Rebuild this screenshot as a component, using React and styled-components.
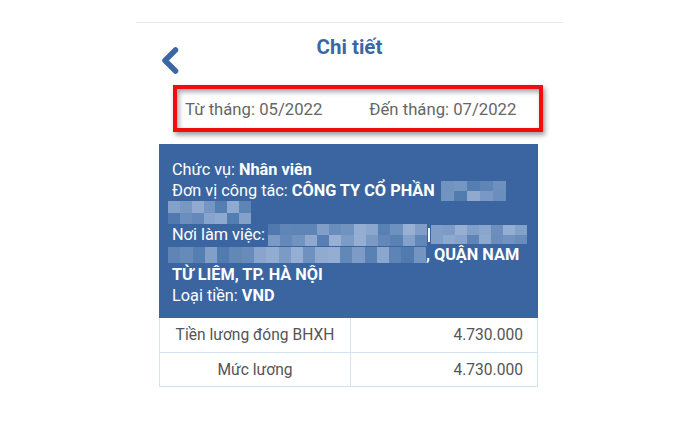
import React from "react";
import styled, { createGlobalStyle } from "styled-components";

const Global = createGlobalStyle`
  html, body { margin: 0; padding: 0; background: #fff; }
  body { font-family: Roboto, "Noto Sans", Arial, sans-serif; -webkit-font-smoothing: antialiased; }
`;

const Page = styled.div`
  width: 700px;
  height: 447px;
  background: #fff;
  padding-top: 22px;
  box-sizing: border-box;
`;

const Frame = styled.div`
  width: 427px;
  margin-left: 136px;
`;

const TopRule = styled.div`
  height: 1px;
  background: #e8e8e8;
`;

const Header = styled.div`
  display: grid;
  grid-template-columns: 1fr auto 1fr;
  align-items: start;
  height: 62px;
`;

const Back = styled.div`
  padding: 24px 0 0 24px;
  line-height: 0;
`;

const Title = styled.h1`
  margin: 12px 0 0;
  font-size: 20.5px;
  line-height: 24px;
  font-weight: 700;
  color: #3b67a2;
`;

const Column = styled.div`
  width: 379px;
  margin-left: 23px;
`;

const DateBox = styled.div`
  margin: 0 -5px 0 14px;
  height: 47px;
  box-sizing: border-box;
  border: 4px solid #f20d0d;
  box-shadow: 2px 3px 5px rgba(0, 0, 0, 0.4), inset 2px 3px 5px rgba(0, 0, 0, 0.35);
  display: flex;
  align-items: center;
  gap: 47px;
  padding: 2px 0 0 8px;
  font-size: 16.7px;
  color: #666;
`;

const Card = styled.div`
  margin-top: 12px;
  background: #3a65a0;
  color: #fff;
  padding: 15px 12px 12px 13px;
  font-size: 16.3px;
  line-height: 21px;
`;

const Line = styled.div`
  display: flex;
  align-items: center;
  height: ${(p) => p.$h || 21}px;
  white-space: nowrap;
`;

const Strong = styled.b`
  font-weight: 700;
`;

const Label = styled.span`
  margin-right: 4px;
`;

const Blur = styled.span`
  display: inline-grid;
  grid-template-columns: repeat(${(p) => p.$cols}, 1fr);
  grid-template-rows: repeat(${(p) => p.$rows}, 1fr);
  width: ${(p) => p.$w}px;
  height: ${(p) => p.$h}px;
  margin-left: ${(p) => p.$ml || 0}px;
  flex: none;
`;

const Cell = styled.span`
  display: block;
`;

const Tick = styled.span`
  display: inline-block;
  width: 2px;
  height: 14px;
  background: #fff;
  margin: 0 1px;
  flex: none;
`;

const Table = styled.div`
  display: grid;
  grid-template-columns: 190px 1fr;
  border: 1px solid #d4e2f4;
  border-top: none;
  font-size: 15.6px;
  color: #555;
`;

const Cellx = styled.div`
  height: 34px;
  display: flex;
  align-items: center;
  justify-content: ${(p) => (p.$right ? "flex-end" : "center")};
  padding-right: ${(p) => (p.$right ? 14 : 0)}px;
  border-left: ${(p) => (p.$right ? "1px solid #d4e2f4" : "none")};
  border-top: ${(p) => (p.$first ? "none" : "1px solid #d4e2f4")};
  box-sizing: border-box;
`;

function rand(seed) {
  let s = seed;
  return () => {
    s = (s * 9301 + 49297) % 233280;
    return s / 233280;
  };
}

function Pix({ w, h, cols, rows, seed, ml }) {
  const r = rand(seed);
  const cells = [];
  for (let i = 0; i < cols * rows; i++) {
    const t = r();
    const a = [0x4c, 0x77, 0xad];
    const b = [0x98, 0xb0, 0xd4];
    const c = a.map((v, k) => Math.round(v + (b[k] - v) * t));
    cells.push(<Cell key={i} style={{ background: `rgb(${c.join(",")})` }} />);
  }
  return (
    <Blur $w={w} $h={h} $cols={cols} $rows={rows} $ml={ml}>
      {cells}
    </Blur>
  );
}

export default function App() {
  return (
    <>
      <Global />
      <Page>
        <Frame>
          <TopRule />
          <Header>
            <Back>
              <svg width="20" height="28" viewBox="0 0 20 28">
                <path d="M15.5 3 L5 13.5 L15.5 24" fill="none" stroke="#3b67a2" strokeWidth="5.5" strokeLinecap="round" strokeLinejoin="round" />
              </svg>
            </Back>
            <Title>Chi tiết</Title>
            <div />
          </Header>
          <Column>
            <DateBox>
              <span>Từ tháng: 05/2022</span>
              <span>Đến tháng: 07/2022</span>
            </DateBox>
            <Card>
              <Line>
                <Label>Chức vụ:</Label>
                <Strong>Nhân viên</Strong>
              </Line>
              <Line>
                <Label>Đơn vị công tác:</Label>
                <Strong>CÔNG TY CỔ PHẦN</Strong>
                <Pix w={65} h={20} cols={5} rows={2} seed={7} ml={6} />
              </Line>
              <Line $h={23}>
                <Pix w={83} h={23} cols={7} rows={2} seed={13} ml={-4} />
              </Line>
              <Line $h={21}>
                <Label>Nơi làm việc:</Label>
                <Pix w={159} h={22} cols={13} rows={2} seed={21} ml={-1} />
                <Tick />
                <Pix w={96} h={19} cols={8} rows={2} seed={37} />
              </Line>
              <Line $h={19}>
                <Pix w={258} h={16} cols={21} rows={1} seed={51} ml={-4} />
                <Strong>, QUẬN NAM</Strong>
              </Line>
              <Line>
                <Strong>TỪ LIÊM, TP. HÀ NỘI</Strong>
              </Line>
              <Line>
                <Label>Loại tiền:</Label>
                <Strong>VND</Strong>
              </Line>
            </Card>
            <Table>
              <Cellx $first>Tiền lương đóng BHXH</Cellx>
              <Cellx $first $right>4.730.000</Cellx>
              <Cellx>Mức lương</Cellx>
              <Cellx $right>4.730.000</Cellx>
            </Table>
          </Column>
        </Frame>
      </Page>
    </>
  );
}
